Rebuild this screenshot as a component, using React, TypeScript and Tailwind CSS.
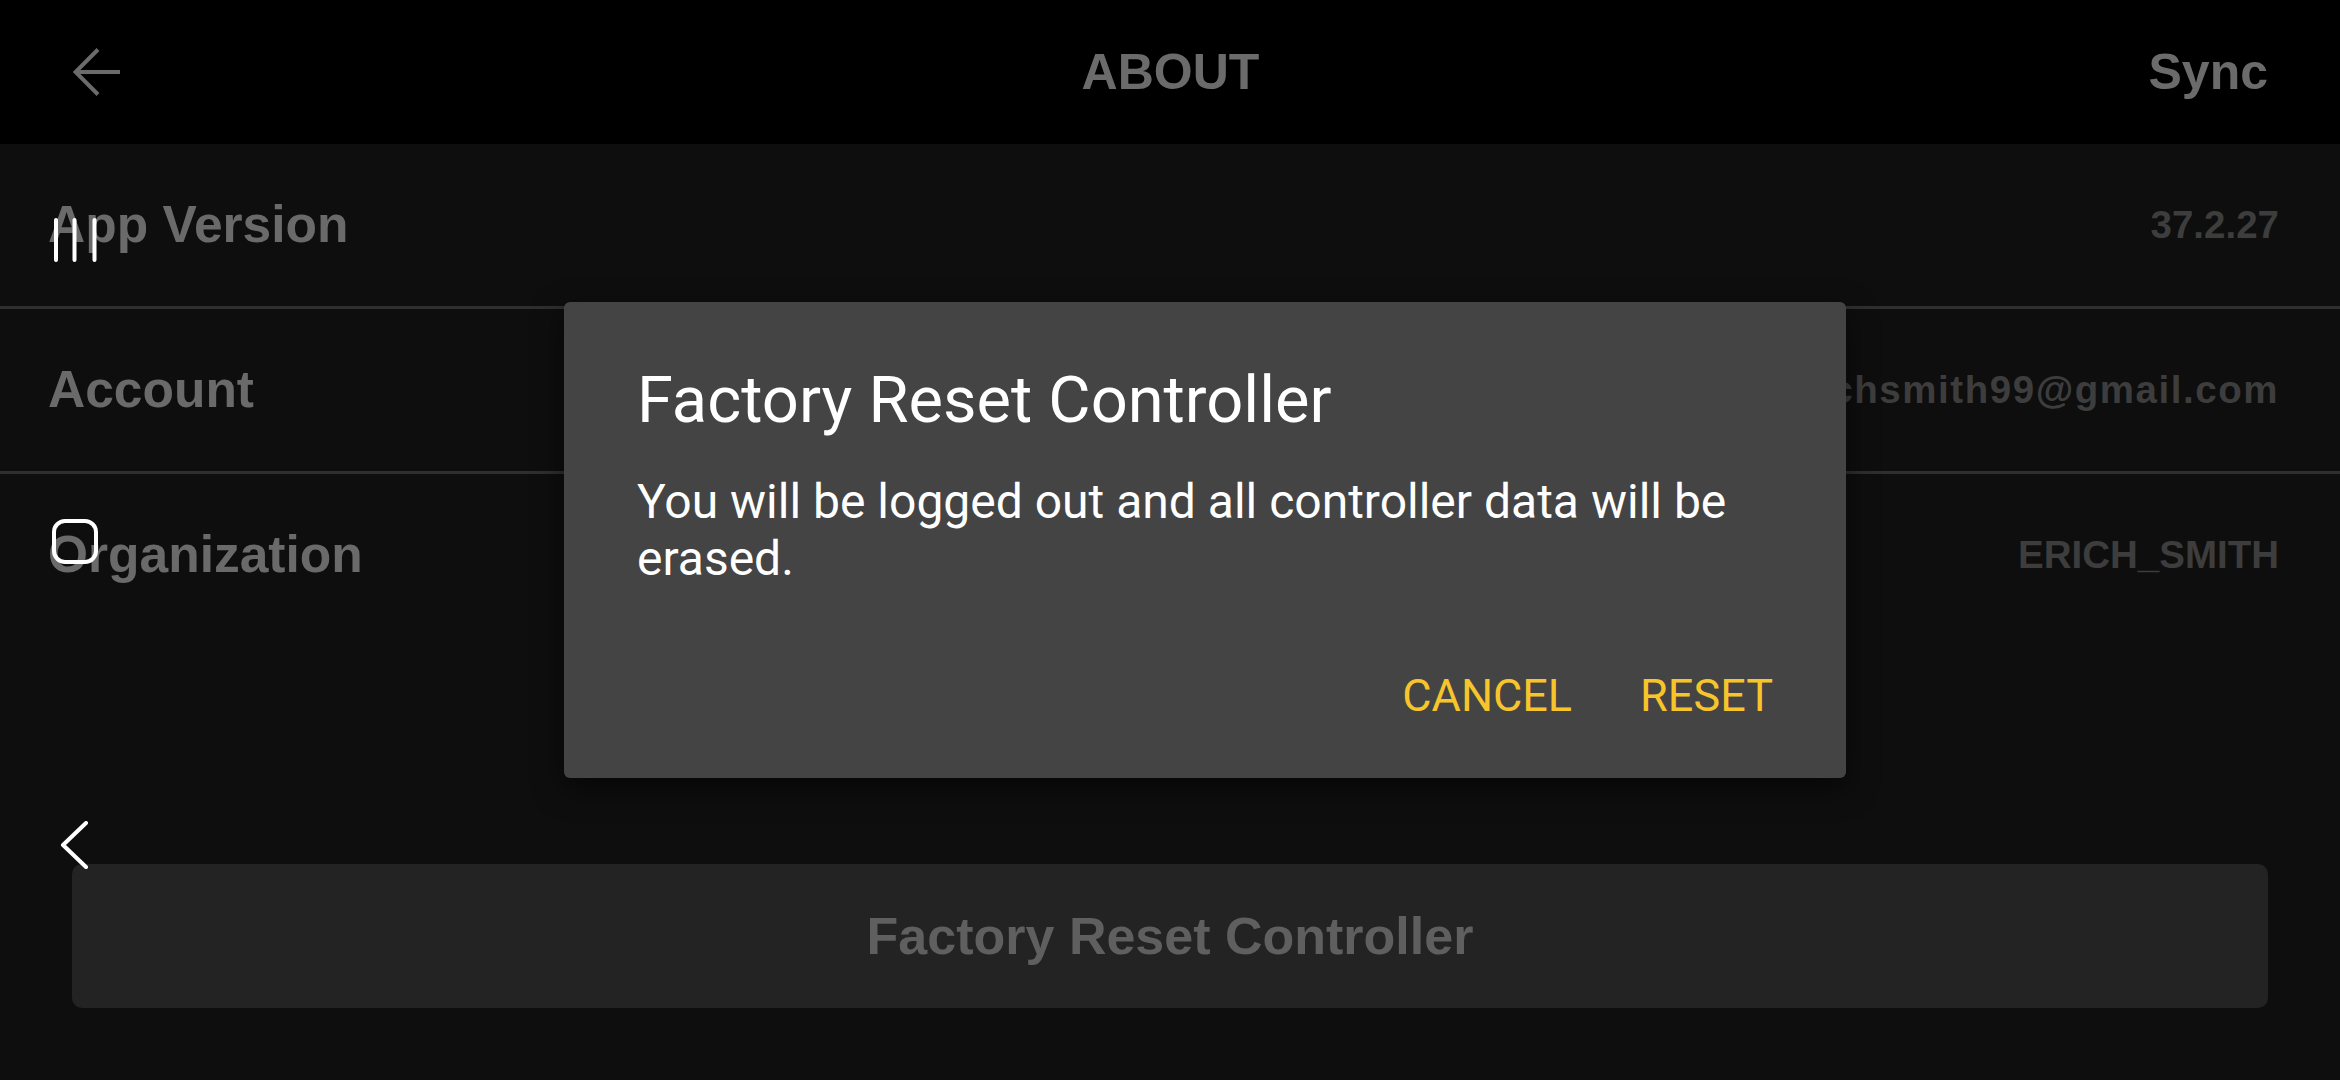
import React from "react";

// About-Seite mit geöffnetem "Factory Reset"-Dialog (Android, Querformat).
const rows = [
  { label: "App Version", value: "37.2.27", spacing: "" },
  { label: "Account", value: "erichsmith99@gmail.com", spacing: "tracking-[0.04em]" },
  { label: "Organization", value: "ERICH_SMITH", spacing: "" },
];

function BackArrow() {
  return (
    <svg width="48" height="48" viewBox="0 0 48 48" fill="none" stroke="#6b6b6b" strokeWidth="4">
      <path d="M47 24H3M25 1.5L2.5 24L25 46.5" />
    </svg>
  );
}

function NavBar() {
  return (
    <div className="absolute left-0 top-0 flex w-[150px] flex-col items-center gap-[257px] pt-[218px]">
      <svg width="46" height="44" viewBox="0 0 46 44" fill="none" stroke="white" strokeWidth="4" strokeLinecap="round">
        <path d="M4 2V42M22.5 2V42M42.5 2V42" />
      </svg>
      <div className="h-[45px] w-[46px] rounded-[13px] border-[4px] border-white" />
      <svg width="30" height="48" viewBox="0 0 30 48" fill="none" stroke="white" strokeWidth="4" strokeLinecap="round" strokeLinejoin="round">
        <path d="M26 2L3 24L26 46" />
      </svg>
    </div>
  );
}

function ResetDialog() {
  return (
    <div className="absolute inset-0 flex items-center justify-center pl-[70px]">
      <div className="w-[1282px] rounded-[6px] bg-[#444444] px-[73px] pt-[61px] pb-[56px] font-['Roboto',sans-serif] font-normal text-white shadow-[0_10px_30px_rgba(0,0,0,0.55)]">
        <h2 className="text-[65px] leading-[74px]">Factory Reset Controller</h2>
        <p className="mt-[36px] text-[48px] leading-[57px]">
          You will be logged out and all controller data will be erased.
        </p>
        <div className="mt-[83px] flex justify-end gap-[68px] text-[45px] leading-[52px] text-[#f7c52b]">
          <button type="button">CANCEL</button>
          <button type="button">RESET</button>
        </div>
      </div>
    </div>
  );
}

export default function App() {
  return (
    <div className="relative h-[1080px] w-[2340px] overflow-hidden bg-[#0e0e0e] font-['Liberation_Sans',Arial,sans-serif] font-bold">
      <header className="grid h-[144px] grid-cols-[1fr_auto_1fr] items-center bg-black pl-[73px] pr-[72px] text-[50px] leading-none text-[#6b6b6b]">
        <BackArrow />
        <div>ABOUT</div>
        <div className="justify-self-end">Sync</div>
      </header>

      {rows.map((row, i) => (
        <div
          key={row.label}
          className={
            "flex h-[162px] items-center justify-between pl-[48px] pr-[61px] leading-none " +
            (i < rows.length - 1 ? "box-content border-b-[3px] border-[#2f2f2f]" : "")
          }
        >
          <span className="text-[51.5px] text-[#6a6a6a]">{row.label}</span>
          <span className={"text-[38.5px] text-[#3d3d3d] " + row.spacing}>{row.value}</span>
        </div>
      ))}

      <div className="mx-[72px] mt-[228px] flex h-[144px] items-center justify-center rounded-[10px] bg-[#232323] text-[52px] leading-none text-[#5f5f5f]">
        Factory Reset Controller
      </div>

      <ResetDialog />
      <NavBar />
    </div>
  );
}
